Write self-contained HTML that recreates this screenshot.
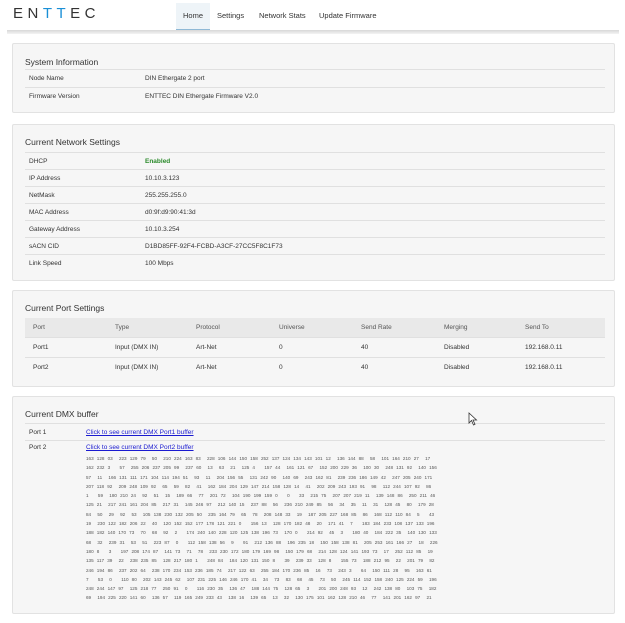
<!DOCTYPE html>
<html><head><meta charset="utf-8"><style>
*{margin:0;padding:0;box-sizing:border-box}
body{width:625px;height:623px;background:#fff;font-family:"Liberation Sans",sans-serif;color:#333;position:relative;overflow:hidden}
.abs{position:absolute}
.logo{left:13px;top:5px;font-size:15px;letter-spacing:4.5px;color:#333}
.logo b{font-weight:normal;color:#1a8fd6}
.nav{top:3px;height:27px;font-size:7.5px;line-height:25px;color:#333}
.home{left:176px;width:34px;background:#eef4f8;border-bottom:1px solid #8fb9d6;text-align:center}
.hdr{left:7px;top:30px;width:612px;height:4px;background:linear-gradient(#d8d8d8,#f3f3f3)}
.panel{left:12px;width:603px;background:#f6f6f6;border:1px solid #e2e2e2;border-radius:2px}
.t{position:absolute;left:12px;font-size:8.5px;color:#333}
.row{position:absolute;left:12px;width:580px;border-top:1px solid #e0e0e0;font-size:6.5px;height:17px;line-height:17px}
.row span{position:absolute}
.hrow{position:absolute;left:12px;width:580px;height:19px;background:#e9e9e9;font-size:6.5px;line-height:19px;color:#555}
.hrow span,.prow span{position:absolute}
.prow{position:absolute;left:12px;width:580px;height:20px;border-top:1px solid #e0e0e0;font-size:6.5px;line-height:20px}
a{color:#1a1ad0;text-decoration:underline;font-size:6.5px}
.nums{position:absolute;left:73px;top:57px;font-size:4.6px;line-height:9.3px;color:#555;white-space:pre;word-spacing:1.85px}
</style></head><body>
<div class="abs logo">EN<b>TT</b>EC</div>
<div class="abs nav home">Home</div>
<div class="abs nav" style="left:217px">Settings</div>
<div class="abs nav" style="left:259px">Network Stats</div>
<div class="abs nav" style="left:319px">Update Firmware</div>
<div class="abs hdr"></div>

<div class="abs panel" style="top:43px;height:70px">
<div class="t" style="top:13px">System Information</div>
<div class="row" style="top:25px"><span style="left:4px">Node Name</span><span style="left:120px">DIN Ethergate 2 port</span></div>
<div class="row" style="top:43px"><span style="left:4px">Firmware Version</span><span style="left:120px">ENTTEC DIN Ethergate Firmware V2.0</span></div>
</div>

<div class="abs panel" style="top:124px;height:157px">
<div class="t" style="top:12px">Current Network Settings</div>
<div class="row" style="top:27px"><span style="left:4px">DHCP</span><span style="left:120px;color:#2a8a2a;font-weight:bold">Enabled</span></div>
<div class="row" style="top:44px"><span style="left:4px">IP Address</span><span style="left:120px">10.10.3.123</span></div>
<div class="row" style="top:61px"><span style="left:4px">NetMask</span><span style="left:120px">255.255.255.0</span></div>
<div class="row" style="top:78px"><span style="left:4px">MAC Address</span><span style="left:120px">d0:9f:d9:90:41:3d</span></div>
<div class="row" style="top:95px"><span style="left:4px">Gateway Address</span><span style="left:120px">10.10.3.254</span></div>
<div class="row" style="top:112px"><span style="left:4px">sACN CID</span><span style="left:120px">D1BD85FF-92F4-FCBD-A3CF-27CC5F8C1F73</span></div>
<div class="row" style="top:129px"><span style="left:4px">Link Speed</span><span style="left:120px">100 Mbps</span></div>
</div>

<div class="abs panel" style="top:290px;height:97px">
<div class="t" style="top:12px">Current Port Settings</div>
<div class="hrow" style="top:27px"><span style="left:8px">Port</span><span style="left:90px">Type</span><span style="left:171px">Protocol</span><span style="left:254px">Universe</span><span style="left:336px">Send Rate</span><span style="left:419px">Merging</span><span style="left:500px">Send To</span></div>
<div class="prow" style="top:46px"><span style="left:8px">Port1</span><span style="left:90px">Input (DMX IN)</span><span style="left:171px">Art-Net</span><span style="left:254px">0</span><span style="left:336px">40</span><span style="left:419px">Disabled</span><span style="left:500px">192.168.0.11</span></div>
<div class="prow" style="top:66px"><span style="left:8px">Port2</span><span style="left:90px">Input (DMX IN)</span><span style="left:171px">Art-Net</span><span style="left:254px">0</span><span style="left:336px">40</span><span style="left:419px">Disabled</span><span style="left:500px">192.168.0.11</span></div>
</div>

<div class="abs panel" style="top:396px;height:218px">
<div class="t" style="top:12px">Current DMX buffer</div>
<div class="row" style="top:26px"><span style="left:4px">Port 1</span><span style="left:61px"><a>Click to see current DMX Port1 buffer</a></span></div>
<div class="row" style="top:43px;height:160px;line-height:14px"><span style="left:4px">Port 2</span><span style="left:61px"><a>Click to see current DMX Port2 buffer</a></span></div>
<div class="nums">163 128 03  223 129 79  50  210 224 163 83  228 106 144 150 158 252 137 124 134 143 101 12  136 144 88  58  101 164 210 27  17
162 232 3   57  255 206 237 205 99  237 60  13  63  21  125 4   157 44  161 121 67  152 200 229 36  100 30  248 131 92  140 156
57  11  166 131 111 171 104 114 194 51  93  11  204 156 55  131 242 90  140 69  243 162 81  239 236 186 149 42  247 205 240 171
207 118 92  209 248 109 92  65  59  82  41  162 184 204 129 147 214 158 128 14  41  202 209 243 193 91  98  112 244 107 92  86
1   59  180 210 24  92  51  15  189 66  77  201 72  104 190 199 159 0   0   33  215 75  207 207 219 11  139 148 86  250 211 46
125 21  217 241 161 204 85  217 31  145 246 97  212 140 15  237 88  56  236 210 249 85  56  34  35  11  31  128 45  80  179 28
84  50  29  92  53  105 138 230 132 205 50  235 164 79  65  78  208 148 33  19  187 205 227 168 85  86  168 112 110 84  5   43
19  230 122 182 206 22  40  120 152 152 177 178 121 221 0   156 13  128 170 182 48  20  171 41  7   183 184 233 108 137 133 196
188 182 140 170 73  70  68  92  2   174 240 140 228 120 125 138 196 73  170 0   214 92  45  3   180 40  184 222 35  140 130 133
68  32  239 31  53  51  223 87  0   112 158 138 56  9   91  212 136 88  196 235 18  150 158 138 81  205 253 161 166 27  18  226
180 8   3   197 208 174 87  141 73  71  78  233 230 172 180 179 169 98  150 179 68  214 128 124 141 193 73  17  252 112 85  19
135 117 39  22  238 235 85  128 217 180 1   248 84  184 120 131 150 8   39  239 33  128 8   155 73  188 212 95  22  201 79  82
246 194 86  237 202 64  238 170 234 153 236 185 74  217 122 63  255 184 170 236 85  16  73  243 3   64  150 111 28  95  163 61
7   53  0   110 80  202 143 245 62  107 231 225 146 246 170 41  34  73  83  68  45  73  50  245 114 152 158 240 125 224 59  196
248 244 147 97  125 218 77  250 91  0   116 230 35  136 47  188 144 75  128 65  3   201 200 248 93  12  242 138 80  103 75  182
69  194 225 220 141 60  136 57  119 165 249 233 43  138 16  139 65  13  32  130 175 101 162 128 210 46  77  141 201 162 97  21</div>
</div>
<svg class="abs" style="left:468px;top:412px" width="10" height="14" viewBox="0 0 10 14"><path d="M1 1 L1 11 L3.5 8.5 L5.5 13 L7 12.3 L5 8 L8.5 8 Z" fill="#fff" stroke="#333" stroke-width="0.8"/></svg>
</body></html>
